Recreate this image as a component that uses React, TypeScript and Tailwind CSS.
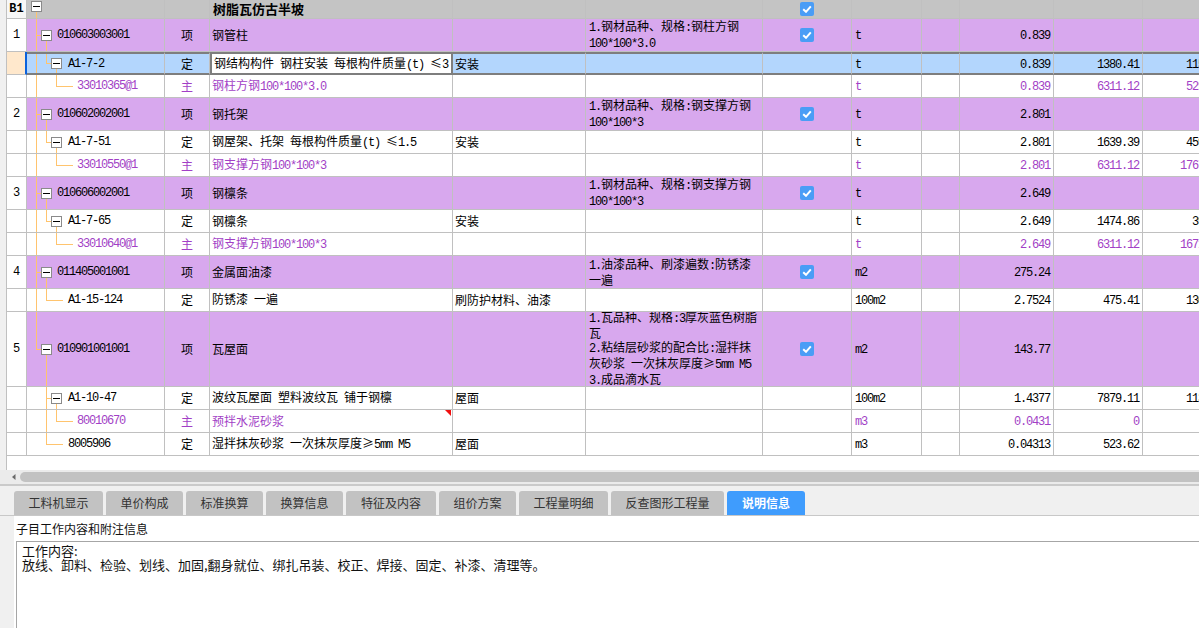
import React from "react";

const LINE = "#ffc46e";
const R = 9.5;
const A = 19.5;
const B = 29.5;

type VMode = "f" | "t" | "d";

type Row = {
  h: number;
  kind: "item" | "def" | "main";
  num?: string;
  code: string;
  lvl: 1 | 2 | 3;
  box: boolean;
  v: [number, VMode][];
  type: string;
  name: string;
  work?: string;
  feat?: string[];
  unit: string;
  qty: string;
  price?: string;
  total?: string;
  sel?: boolean;
  mark?: boolean;
};

const rows: Row[] = [
  { h: 33, kind: "item", num: "1", code: "010603003001", lvl: 1, box: true, v: [[R, "f"], [A, "d"]], type: "项", name: "钢管柱", feat: ["1.钢材品种、规格:钢柱方钢100*100*3.0"], unit: "t", qty: "0.839" },
  { h: 23, kind: "def", code: "A1-7-2", lvl: 2, box: true, v: [[R, "f"], [A, "t"], [B, "d"]], type: "定", name: "钢结构构件 钢柱安装 每根构件质量(t) ≤3", work: "安装", unit: "t", qty: "0.839", price: "1380.41", total: "1158.16", sel: true },
  { h: 23, kind: "main", code: "33010365@1", lvl: 3, box: false, v: [[R, "f"], [B, "t"]], type: "主", name: "钢柱方钢100*100*3.0", unit: "t", qty: "0.839", price: "6311.12", total: "5295.03" },
  { h: 33, kind: "item", num: "2", code: "010602002001", lvl: 1, box: true, v: [[R, "f"], [A, "d"]], type: "项", name: "钢托架", feat: ["1.钢材品种、规格:钢支撑方钢100*100*3"], unit: "t", qty: "2.801" },
  { h: 23, kind: "def", code: "A1-7-51", lvl: 2, box: true, v: [[R, "f"], [A, "t"], [B, "d"]], type: "定", name: "钢屋架、托架 每根构件质量(t) ≤1.5", work: "安装", unit: "t", qty: "2.801", price: "1639.39", total: "4591.93" },
  { h: 23, kind: "main", code: "33010550@1", lvl: 3, box: false, v: [[R, "f"], [B, "t"]], type: "主", name: "钢支撑方钢100*100*3", unit: "t", qty: "2.801", price: "6311.12", total: "17677.45" },
  { h: 33, kind: "item", num: "3", code: "010606002001", lvl: 1, box: true, v: [[R, "f"], [A, "d"]], type: "项", name: "钢檩条", feat: ["1.钢材品种、规格:钢支撑方钢100*100*3"], unit: "t", qty: "2.649" },
  { h: 23, kind: "def", code: "A1-7-65", lvl: 2, box: true, v: [[R, "f"], [A, "t"], [B, "d"]], type: "定", name: "钢檩条", work: "安装", unit: "t", qty: "2.649", price: "1474.86", total: "3906.9" },
  { h: 23, kind: "main", code: "33010640@1", lvl: 3, box: false, v: [[R, "f"], [B, "t"]], type: "主", name: "钢支撑方钢100*100*3", unit: "t", qty: "2.649", price: "6311.12", total: "16718.12" },
  { h: 33, kind: "item", num: "4", code: "011405001001", lvl: 1, box: true, v: [[R, "f"], [A, "d"]], type: "项", name: "金属面油漆", feat: ["1.油漆品种、刷漆遍数:防锈漆一遍"], unit: "m2", qty: "275.24" },
  { h: 23, kind: "def", code: "A1-15-124", lvl: 2, box: false, v: [[R, "f"], [A, "t"]], type: "定", name: "防锈漆 一遍", work: "刷防护材料、油漆", unit: "100m2", qty: "2.7524", price: "475.41", total: "1308.52" },
  { h: 75, kind: "item", num: "5", code: "010901001001", lvl: 1, box: true, v: [[R, "t"], [A, "d"]], type: "项", name: "瓦屋面", feat: ["1.瓦品种、规格:3厚灰蓝色树脂瓦", "2.粘结层砂浆的配合比:湿拌抹灰砂浆 一次抹灰厚度≥5mm M5", "3.成品滴水瓦"], unit: "m2", qty: "143.77" },
  { h: 23, kind: "def", code: "A1-10-47", lvl: 2, box: true, v: [[A, "f"], [B, "d"]], type: "定", name: "波纹瓦屋面 塑料波纹瓦 铺于钢檩", work: "屋面", unit: "100m2", qty: "1.4377", price: "7879.11", total: "11327.8" },
  { h: 23, kind: "main", code: "80010670", lvl: 3, box: false, v: [[A, "f"], [B, "t"]], type: "主", name: "预拌水泥砂浆", unit: "m3", qty: "0.0431", price: "0", mark: true },
  { h: 23, kind: "def", code: "8005906", lvl: 2, box: false, v: [[A, "t"]], type: "定", name: "湿拌抹灰砂浆 一次抹灰厚度≥5mm M5", work: "屋面", unit: "m3", qty: "0.04313", price: "523.62" },
];

const heightClass: Record<number, string> = {
  19: "h-[19px]",
  23: "h-[23px]",
  33: "h-[33px]",
  75: "h-[75px]",
};

const cols =
  "grid grid-cols-[20px_138px_45px_243px_133px_177px_89px_70px_38px_94px_89px_89px]";

// ascii runs get the narrow mono face so digits sit at 6px like the original
function Txt({ s }: { s: string }) {
  const parts = s.split(/([\x20-\x7e]+)/);
  return (
    <span>
      {parts.map((p, i) =>
        i % 2 === 1 ? (
          <span key={i} className="font-['Liberation_Mono',monospace] tracking-[-1.2px]">
            {p}
          </span>
        ) : (
          <React.Fragment key={i}>{p}</React.Fragment>
        )
      )}
    </span>
  );
}

function MinusBox({ x, y }: { x: number; y: number }) {
  return (
    <g>
      <rect x={x + 0.5} y={y + 0.5} width={10} height={10} fill="#fff" stroke="#8a8a8a" />
      <line x1={x + 2} x2={x + 9} y1={y + 5.5} y2={y + 5.5} stroke="#000" />
    </g>
  );
}

function TreeLines({ row, ch }: { row: Row; ch: number }) {
  const w = row.lvl === 1 ? 30 : row.lvl === 2 ? 41 : 50;
  const c = Math.floor(ch / 2);
  const cy = c + 0.5;
  const boxX = row.lvl === 1 ? 14 : 24;
  const by = c - 5;
  const segs: React.ReactNode[] = [];
  row.v.forEach(([x, m], i) => {
    const y1 = m === "d" ? (row.box ? by + 11 : c) : 0;
    const y2 = m === "t" ? c + 1 : ch;
    segs.push(<line key={"v" + i} x1={x} x2={x} y1={y1} y2={y2} stroke={LINE} />);
  });
  let hx1 = R;
  let hx2 = 14;
  if (row.lvl === 2) {
    hx1 = A;
    hx2 = row.box ? 24 : 36;
  } else if (row.lvl === 3) {
    hx1 = B;
    hx2 = 46;
  }
  return (
    <svg width={w} height={ch} className="shrink-0">
      {segs}
      <line x1={hx1} x2={hx2} y1={cy} y2={cy} stroke={LINE} />
      {row.box && <MinusBox x={boxX} y={by} />}
    </svg>
  );
}

function Check() {
  return (
    <span className="w-[14px] h-[14px] rounded-[2px] bg-[#4a9df6] flex items-center justify-center">
      <svg width="10" height="8" viewBox="0 0 10 8">
        <path d="M1.2 4.2 L4 6.8 L8.8 1.4" stroke="#fff" strokeWidth="2" fill="none" />
      </svg>
    </span>
  );
}

const cell = "border-r border-b border-[#c0c0c0] flex items-center overflow-hidden";

function HeaderRow() {
  return (
    <div className={`${cols} h-[19px] text-[12px] text-black whitespace-nowrap`}>
      <div className={`${cell} justify-center bg-[#f7f7f7] font-bold font-['Liberation_Mono',monospace]`}>B1</div>
      <div className={`${cell} bg-[#c4c4c4] items-start`}>
        <svg width={30} height={18} className="shrink-0">
          <line x1={R} x2={R} y1={12} y2={18} stroke={LINE} />
          <MinusBox x={4} y={1} />
        </svg>
      </div>
      <div className={`${cell} bg-[#c4c4c4]`} />
      <div className={`${cell} bg-[#c4c4c4] pl-[3px] text-[13px] font-bold`}>树脂瓦仿古半坡</div>
      <div className={`${cell} bg-[#c4c4c4]`} />
      <div className={`${cell} bg-[#c4c4c4]`} />
      <div className={`${cell} bg-[#c4c4c4] justify-center`}>
        <Check />
      </div>
      <div className={`${cell} bg-[#c4c4c4]`} />
      <div className={`${cell} bg-[#c4c4c4]`} />
      <div className={`${cell} bg-[#c4c4c4]`} />
      <div className={`${cell} bg-[#c4c4c4]`} />
      <div className={`${cell} bg-[#c4c4c4]`} />
    </div>
  );
}

function GridRow({ row }: { row: Row }) {
  const bg = row.kind === "item" ? "bg-[#d8a8ee]" : row.sel ? "bg-[#b3d6fd]" : "bg-white";
  const color = row.kind === "main" ? "text-[#a23fc6]" : "text-black";
  const sel = row.sel ? "border-t-2 border-b-2 border-t-[#7e7e7e] border-b-[#7e7e7e]" : "";
  const ch = row.h - (row.sel ? 4 : 1);
  const c = `${cell} ${bg} ${sel}`;
  return (
    <div className={`${cols} ${heightClass[row.h]} text-[12px] whitespace-nowrap ${color}`}>
      <div
        className={`${cell} justify-center text-black font-['Liberation_Mono',monospace] ${
          row.sel ? "bg-[#ffe8cc] border-r-2 border-r-[#0b62dc]" : "bg-white"
        }`}
      >
        {row.num}
      </div>
      <div className={c}>
        <TreeLines row={row} ch={ch} />
        <span className="font-['Liberation_Mono',monospace] tracking-[-1.2px]">{row.code}</span>
      </div>
      <div className={`${c} justify-center`}>{row.type}</div>
      <div
        className={`${cell} ${sel} pl-[2px] relative ${
          row.sel ? "bg-white border-l-2 border-l-[#7e7e7e] border-r-2 border-r-[#7e7e7e]" : bg
        }`}
      >
        <Txt s={row.name} />
        {row.mark && (
          <span className="absolute right-[1px] top-0 w-0 h-0 border-t-[6px] border-t-[#f01010] border-l-[6px] border-l-transparent" />
        )}
      </div>
      <div className={`${c} pl-[2px]`}>{row.work}</div>
      <div className={`${c} pl-[3px] pr-[1px]`}>
        <div className="leading-[14px] w-full whitespace-normal">
          {row.feat?.map((f, i) => (
            <div key={i}>
              <Txt s={f} />
            </div>
          ))}
        </div>
      </div>
      <div className={`${c} justify-center`}>{row.kind === "item" && <Check />}</div>
      <div className={`${c} pl-[3px]`}>
        <Txt s={row.unit} />
      </div>
      <div className={c} />
      <div className={`${c} justify-end pr-[3px]`}>
        <Txt s={row.qty} />
      </div>
      <div className={`${c} justify-end pr-[3px]`}>
        <Txt s={row.price ?? ""} />
      </div>
      <div className={`${c} justify-end pr-[3px]`}>
        <Txt s={row.total ?? ""} />
      </div>
    </div>
  );
}

const tabs: [string, string][] = [
  ["工料机显示", "w-[89px]"],
  ["单价构成", "w-[77px]"],
  ["标准换算", "w-[77px]"],
  ["换算信息", "w-[77px]"],
  ["特征及内容", "w-[90px]"],
  ["组价方案", "w-[77px]"],
  ["工程量明细", "w-[89px]"],
  ["反查图形工程量", "w-[113px]"],
  ["说明信息", "w-[78px]"],
];

export default function App() {
  return (
    <div className="w-[1199px] h-[628px] overflow-hidden bg-[#f0f0f0] font-['Noto_Sans_CJK_SC',sans-serif] text-black">
      {/* grid area */}
      <div className="flex h-[470px] bg-white">
        <div className="w-[7px] shrink-0 bg-[#f0f0f0] border-r border-[#c0c0c0]" />
        <div className="shrink-0">
          <HeaderRow />
          {rows.map((r, i) => (
            <GridRow key={i} row={r} />
          ))}
        </div>
      </div>

      {/* horizontal scrollbar */}
      <div className="h-[14px] flex items-center bg-[#ebebeb]">
        <svg width="20" height="14" className="shrink-0">
          <path d="M12 7 L15.5 4 L15.5 10 Z" fill="#6a6a6a" />
        </svg>
        <div className="flex-1 h-[10px] rounded-l-full bg-[#c2c2c2]" />
      </div>
      <div className="h-[2px] bg-[#cacaca]" />

      {/* tabs */}
      <div className="h-[30px] flex items-end gap-[3px] pl-[14px] border-b border-[#c8c8c8]">
        {tabs.map(([t, w], i) => {
          const active = i === tabs.length - 1;
          return (
            <div
              key={t}
              className={`${w} h-[24px] rounded-t-[3px] flex items-center justify-center text-[12px] ${
                active ? "bg-[#3f9cfd] text-white font-bold" : "bg-[#c2c2c2] text-[#333]"
              }`}
            >
              {t}
            </div>
          );
        })}
      </div>

      {/* description panel */}
      <div className="flex h-[112px]">
        <div className="w-[14px] shrink-0" />
        <div className="flex-1 bg-white flex flex-col">
          <div className="h-[25px] flex items-center pl-[2px] text-[12px] text-[#111]">子目工作内容和附注信息</div>
          <div className="flex-1 ml-[2px] border-l border-t border-[#a6a6a6] pl-[5px] pt-[2px] text-[13px] leading-[14px] text-[#111]">
            <div>工作内容:</div>
            <div>放线、卸料、检验、划线、加固,翻身就位、绑扎吊装、校正、焊接、固定、补漆、清理等。</div>
          </div>
        </div>
      </div>
    </div>
  );
}
